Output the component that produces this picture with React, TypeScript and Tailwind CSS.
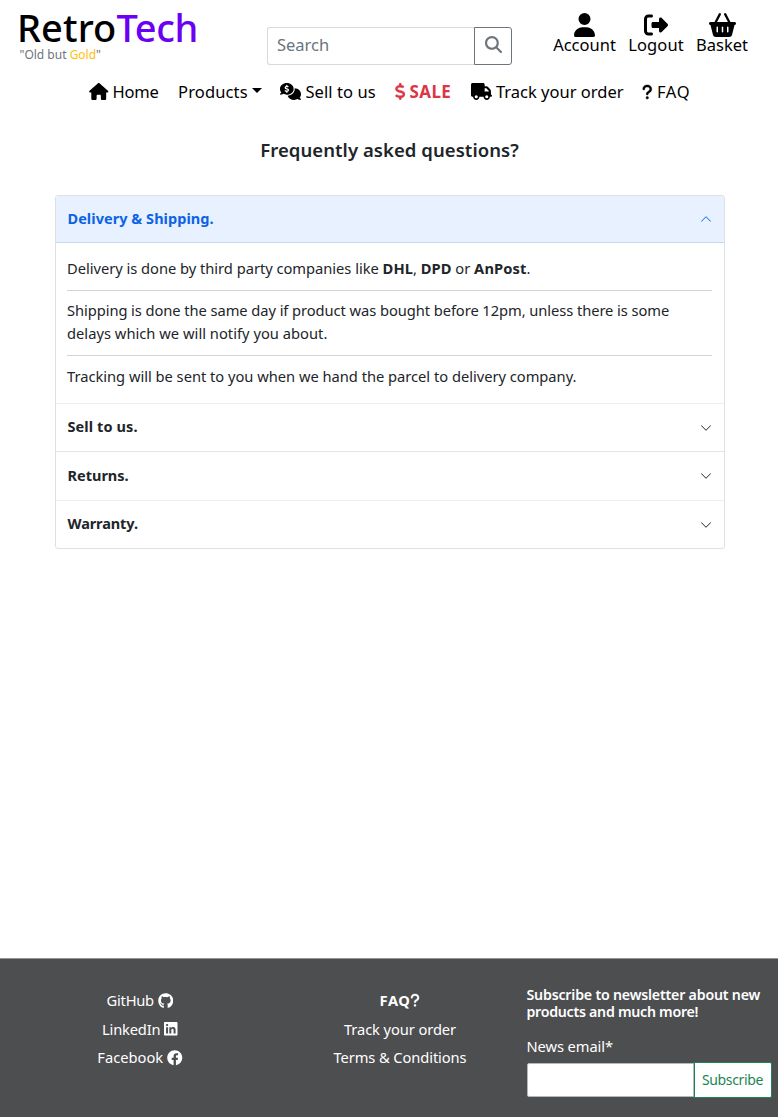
import {
  FaUser, FaRightFromBracket, FaBasketShopping, FaMagnifyingGlass, FaHouse,
  FaCommentsDollar, FaDollarSign, FaTruck, FaQuestion, FaGithub, FaLinkedin,
} from "react-icons/fa6";
import { FaFacebook } from "react-icons/fa";

function Chevron({ className }: { className: string }) {
  return (
    <svg viewBox="0 0 16 16" className={className} fill="currentColor">
      <path fillRule="evenodd" d="M1.646 4.646a.5.5 0 0 1 .708 0L8 10.293l5.646-5.647a.5.5 0 0 1 .708.708l-6 6a.5.5 0 0 1-.708 0l-6-6a.5.5 0 0 1 0-.708z" />
    </svg>
  );
}

function Header() {
  return (
    <header className="flex h-[79px] items-start text-black">
      <div className="w-[267px] shrink-0 pt-[8px] pl-[17px]">
        <div className="flex h-[38px] text-[38px] leading-[38px] font-medium">
          <span className="tracking-[0.1px]">Retro</span>
          <span className="tracking-[-0.4px] text-[#6a00f4]">Tech</span>
        </div>
        <div className="ml-[2.5px] text-[12px] leading-[18px] text-[#6c757d]">
          "Old but <span className="text-[#ffc107]">Gold</span>"
        </div>
      </div>
      <div className="mt-[27px] flex h-[38px] w-[245px] shrink-0">
        <input
          placeholder="Search"
          className="w-[207px] rounded-l-[3px] border border-r-0 border-[#d6dade] bg-white pb-[2px] pl-[9px] text-[16.5px] outline-none placeholder:text-[#6c757d]"
        />
        <button className="flex w-[38px] items-center justify-center rounded-r-[3px] border border-[#6c757d] pb-[3px] text-[#6c757d]">
          <FaMagnifyingGlass className="size-[17px]" />
        </button>
      </div>
      <nav className="mt-[13px] ml-[41px] flex gap-[12px] text-[16.5px] leading-[24px]">
        <a className="flex w-[63px] flex-col items-center">
          <FaUser className="h-[24px] w-[21px]" />
          <span className="-mt-[4px] whitespace-nowrap">Account</span>
        </a>
        <a className="flex w-[56px] flex-col items-center">
          <FaRightFromBracket className="size-[24px]" />
          <span className="-mt-[4px] tracking-[0.11px] whitespace-nowrap">Logout</span>
        </a>
        <a className="flex w-[52px] flex-col items-center">
          <FaBasketShopping className="h-[24px] w-[27px]" />
          <span className="-mt-[4px] whitespace-nowrap">Basket</span>
        </a>
      </nav>
    </header>
  );
}

function Menu() {
  return (
    <nav className="flex h-[25px] pl-[89px] text-[16.5px] leading-[25px] whitespace-nowrap text-black">
      <a className="flex w-[89px] items-center gap-[4px]">
        <FaHouse className="h-[17px] w-[19.5px]" />
        <span className="tracking-[-0.21px]">Home</span>
      </a>
      <a className="flex w-[102px] items-center gap-[4px]">
        <span className="tracking-[0.15px]">Products</span>
        <span className="-mt-[2px] border-x-[5px] border-t-[5px] border-x-transparent border-t-black" />
      </a>
      <a className="flex w-[114.5px] items-center gap-[4.5px]">
        <FaCommentsDollar className="h-[17px] w-[21px]" />
        <span className="tracking-[0.06px]">Sell to us</span>
      </a>
      <a className="flex w-[76.5px] items-center gap-[4.5px] font-bold text-[#dc3545]">
        <FaDollarSign className="h-[17px] w-[10.5px] stroke-current stroke-[14]" />
        <span className="text-[17px] tracking-[0.4px]">SALE</span>
      </a>
      <a className="flex w-[171px] items-center gap-[4px]">
        <FaTruck className="h-[17px] w-[21px]" />
        <span>Track your order</span>
      </a>
      <a className="flex items-center gap-[4.5px]">
        <FaQuestion className="h-[16px] w-[10.5px] stroke-current stroke-[14]" />
        <span className="tracking-[0.6px]">FAQ</span>
      </a>
    </nav>
  );
}

function Accordion() {
  return (
    <section className="mr-[53px] ml-[55px] mt-[31px] overflow-hidden rounded-[3px] border border-[#dfe0e1] text-[14.7px] leading-[23px] text-[#212529]">
      <h2 className="flex h-[47px] items-center justify-between border-b border-[#c9d7ea] bg-[#e7f1ff] pr-[12px] pl-[11.5px] text-[14.5px] font-bold text-[#0c63e4]">
        <span className="-mt-[2px] tracking-[0.05px]">Delivery &amp; Shipping.</span>
        <Chevron className="size-[12px] rotate-180" />
      </h2>
      <div className="h-[160px] pr-[12px] pl-[11px] pt-[14px]">
        <p className="h-[34px] border-b border-[#d3d4d5]">
          <span className="tracking-[-0.024px]">Delivery is done by third party companies like </span>
          <b className="tracking-[0.1px]">DHL</b>, <b>DPD</b> or{" "}
          <b className="tracking-[0.12px]">AnPost</b>.
        </p>
        <p className="h-[65px] border-b border-[#d3d4d5] pt-[8px]">
          <span className="block tracking-[-0.066px] whitespace-nowrap">Shipping is done the same day if product was bought before 12pm, unless there is some</span>
          <span className="block tracking-[0.02px]">delays which we will notify you about.</span>
        </p>
        <p className="pt-[9px] tracking-[-0.018px]">Tracking will be sent to you when we hand the parcel to delivery company.</p>
      </div>
      <h2 className="flex h-[48px] items-center justify-between border-t border-[#ededee] pr-[12px] pl-[11.5px] text-[14.5px] font-bold">
        <span className="-mt-[2px] tracking-[0.11px]">Sell to us.</span>
        <Chevron className="size-[12px]" />
      </h2>
      <h2 className="flex h-[49px] items-center justify-between border-t border-[#e4e5e6] pr-[12px] pl-[11.5px] text-[14.5px] font-bold">
        <span className="-mt-[2px]">Returns.</span>
        <Chevron className="size-[12px]" />
      </h2>
      <h2 className="flex h-[48px] items-center justify-between border-t border-[#ededee] pr-[12px] pl-[11.5px] text-[14.5px] font-bold">
        <span className="-mt-[2px] tracking-[-0.1px]">Warranty.</span>
        <Chevron className="size-[12px]" />
      </h2>
    </section>
  );
}

function Footer() {
  return (
    <footer className="flex h-[159px] border-t border-[#949596] bg-[#4d4e50] text-[14.7px] leading-[28.7px] whitespace-nowrap text-white">
      <div className="flex w-[280px] flex-col items-center pt-[27px]">
        <a className="flex items-center gap-[4px]"><span className="tracking-[-0.25px]">GitHub</span><FaGithub className="size-[15.5px]" /></a>
        <a className="flex items-center gap-[4px]"><span className="tracking-[-0.17px]">LinkedIn</span><FaLinkedin className="h-[15.5px] w-[13.5px]" /></a>
        <a className="flex items-center gap-[4px]"><span>Facebook</span><FaFacebook className="size-[15.5px]" /></a>
      </div>
      <div className="flex w-[240px] flex-col items-center pt-[27px]">
        <a className="flex items-center font-bold"><span className="tracking-[0.5px]">FAQ</span><FaQuestion className="h-[14.5px] w-[10px] stroke-current stroke-[10]" /></a>
        <a className="tracking-[-0.1px]">Track your order</a>
        <a className="tracking-[-0.1px]">Terms &amp; Conditions</a>
      </div>
      <div className="w-[258px] pt-[27px] pl-[6.5px]">
        <h3 className="text-[14.2px] leading-[17px] font-semibold">
          <span className="block tracking-[-0.2px]">Subscribe to newsletter about new</span>
          <span className="block tracking-[-0.27px]">products and much more!</span>
        </h3>
        <label className="mt-[12px] block h-[30px] tracking-[-0.09px]">News email*</label>
        <div className="flex h-[36px] items-center">
          <input className="h-[34px] w-[167px] rounded-l-[2px] border border-[#b5b8bb] bg-white" />
          <button className="h-[36px] w-[78px] rounded-r-[2px] border border-[#198754] bg-white pb-px text-[14px] leading-[32px] tracking-[-0.36px] text-[#198754]">Subscribe</button>
        </div>
      </div>
    </footer>
  );
}

export default function App() {
  return (
    <div className="flex h-[1117px] w-[778px] flex-col overflow-hidden bg-white font-['Noto_Sans',sans-serif]">
      <Header />
      <Menu />
      <h1 className="mt-[32px] pl-px text-center text-[18.5px] leading-[28px] font-semibold tracking-[0.05px] text-[#212529]">Frequently asked questions?</h1>
      <Accordion />
      <div className="grow" />
      <Footer />
    </div>
  );
}
